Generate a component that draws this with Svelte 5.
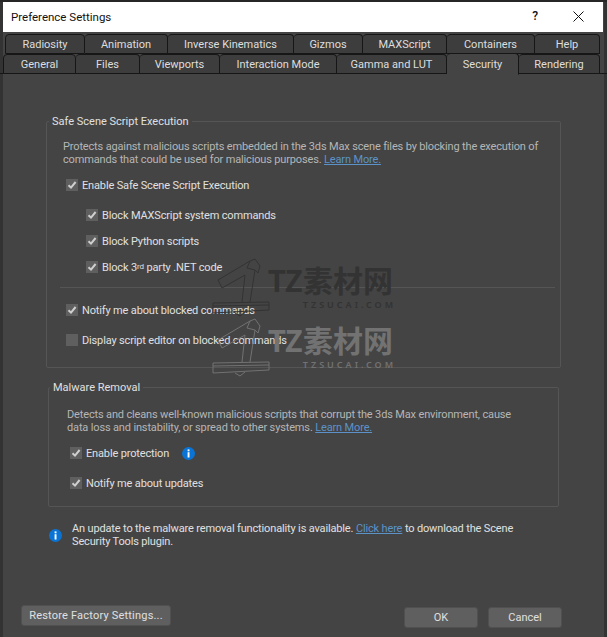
<script>
  const row1 = ['Radiosity', 'Animation', 'Inverse Kinematics', 'Gizmos', 'MAXScript', 'Containers', 'Help'];
  const row2 = ['General', 'Files', 'Viewports', 'Interaction Mode', 'Gamma and LUT', 'Security', 'Rendering'];
</script>

{#snippet check(on)}
  <span class="box">
    {#if on}
      <svg viewBox="0 0 12 12" width="12" height="12"><path d="M2.5 6.2 5 8.6 9.6 3" fill="none" stroke="#cfcfcf" stroke-width="2" /></svg>
    {/if}
  </span>
{/snippet}

{#snippet info()}
  <svg class="info" viewBox="0 0 13 13" width="13" height="13">
    <circle cx="6.5" cy="6.5" r="6.5" fill="#0a74d6" />
    <rect x="5.6" y="2.4" width="1.9" height="1.9" fill="#fff" />
    <rect x="5.6" y="5.2" width="1.9" height="5.3" fill="#fff" />
  </svg>
{/snippet}

{#snippet mark(cls)}
  <div class="mark {cls}">
    <svg viewBox="0 0 60 64" width="60" height="64">
      <g fill="none" stroke="currentColor" stroke-width="1">
        <path d="M5 22 37 3 42 1 47 8 45 15 42 12 37 44M9 30 5 22M9 30 32 17 29 44M37 3 34 10 42 12" />
        <path d="M0 45 56 44V52L0 55ZM0 48 56 47M22 55 27 58 32 54" />
      </g>
    </svg>
    <div class="mark-text">
      <span class="mark-big">TZ素材网</span>
      <span class="mark-small">TZSUCAI.COM</span>
    </div>
  </div>
{/snippet}

<div class="window">
  <header class="titlebar">
    <span class="title">Preference Settings</span>
    <span class="help">?</span>
    <svg class="close" viewBox="0 0 11 11" width="11" height="11"><path d="M.5.5l10 10M10.5.5l-10 10" stroke="#111" fill="none" stroke-width="1" /></svg>
  </header>

  <nav class="tabs">
    <div class="tabrow first">
      {#each row1 as t}<span class="tab">{t}</span>{/each}
    </div>
    <div class="tabrow second">
      {#each row2 as t}<span class="tab" class:active={t === 'Security'}>{t}</span>{/each}
    </div>
  </nav>

  <main class="panel">
    <section class="group one">
      <h2>Safe Scene Script Execution</h2>
      <p class="desc">Protects against malicious scripts embedded in the 3ds Max scene files by blocking the execution of<br />commands that could be used for malicious purposes. <a href="#top">Learn More.</a></p>
      <div class="opt o1">{@render check(true)}<span>Enable Safe Scene Script Execution</span></div>
      <div class="sub">
        <div class="opt">{@render check(true)}<span>Block MAXScript system commands</span></div>
        <div class="opt">{@render check(true)}<span>Block Python scripts</span></div>
        <div class="opt">{@render check(true)}<span>Block 3<sup>rd</sup> party .NET code</span></div>
      </div>
      <hr />
      <div class="lower">
        <div class="opt">{@render check(true)}<span>Notify me about blocked commands</span></div>
        <div class="opt">{@render check(false)}<span>Display script editor on blocked commands</span></div>
      </div>
    </section>

    <section class="group two">
      <h2>Malware Removal</h2>
      <p class="desc">Detects and cleans well-known malicious scripts that corrupt the 3ds Max environment, cause<br />data loss and instability, or spread to other systems. <a href="#top">Learn More.</a></p>
      <div class="prot">
        <div class="opt">{@render check(true)}<span>Enable protection</span>{@render info()}</div>
        <div class="opt">{@render check(true)}<span>Notify me about updates</span></div>
      </div>
    </section>

    <div class="notice">
      {@render info()}
      <p>An update to the malware removal functionality is available. <a href="#top">Click here</a> to download the Scene<br />Security Tools plugin.</p>
    </div>
  </main>

  <footer class="footer">
    <button class="restore">Restore Factory Settings...</button>
    <div class="actions">
      <button>OK</button>
      <button>Cancel</button>
    </div>
  </footer>

  {@render mark('dark')}
  {@render mark('light')}
</div>

<style>
  :global(body) {
    margin: 0;
    background: #444;
  }
  .window {
    position: relative;
    width: 607px;
    height: 637px;
    box-sizing: border-box;
    padding-top: 2px;
    display: flex;
    flex-direction: column;
    background: #444;
    color: #e0e0e0;
    font-family: Roboto, sans-serif;
    font-size: 11px;
    letter-spacing: -0.15px;
    overflow: hidden;
    box-shadow: inset 0 2px 0 #262626, inset 3px 0 0 #333, inset -3px 0 0 #333;
  }
  .titlebar {
    height: 30px;
    margin: 0 4px 0 3px;
    background: #fff;
    color: #111;
    display: flex;
    align-items: center;
    flex: none;
  }
  .title {
    margin: 0 0 0 8px;
    font-size: 11.5px;
    letter-spacing: 0;
    flex: 1;
  }
  .help {
    font-size: 12px;
    font-weight: 500;
    margin: -2px 35px 0 0;
  }
  .close {
    margin: -2px 19px 0 0;
  }
  .tabs {
    flex: none;
    height: 42px;
    padding-top: 2px;
    box-sizing: border-box;
    border-bottom: 1px solid #161616;
  }
  .tabrow {
    display: grid;
    height: 20px;
  }
  .first {
    margin-left: 5px;
    width: 595px;
    grid-template-columns: 80px 83px 126px 69px 84px 88px 65px;
  }
  .second {
    margin-left: 3px;
    width: 597px;
    grid-template-columns: 73px 64px 80px 117px 110px 72px 81px;
  }
  .tab {
    display: flex;
    align-items: center;
    justify-content: center;
    background: #3d3d3d;
    border: 1px solid #161616;
    border-left-width: 0;
    border-radius: 4px 4px 0 0;
    color: #dedede;
    letter-spacing: 0;
  }
  .tab:first-child {
    border-left-width: 1px;
  }
  .tab.active {
    background: #444;
    border-bottom-color: #444;
    position: relative;
    margin-top: -1px;
    margin-bottom: -1px;
  }
  .panel {
    flex: 1;
    padding: 47px 46px 0;
    display: flex;
    flex-direction: column;
  }
  .group {
    border: 1px solid #555;
    border-radius: 2px;
    box-sizing: border-box;
  }
  .group h2 {
    width: fit-content;
    margin: -8px 0 0 2px;
    padding: 0 3px;
    background: #444;
    font: inherit;
    line-height: 15px;
    color: #e0e0e0;
    letter-spacing: 0;
  }
  .two h2 {
    margin-left: 1px;
  }
  .one {
    height: 247px;
  }
  .two {
    height: 120px;
    margin: 19px 2px 0;
  }
  .desc {
    margin: 11px 0 0 16px;
    line-height: 13px;
    color: #b6b6b6;
    white-space: nowrap;
  }
  .two .desc {
    margin: 13px 0 0 18px;
  }
  a {
    color: #5b93c9;
  }
  .opt {
    display: flex;
    align-items: center;
    gap: 4px;
    height: 16px;
    white-space: nowrap;
  }
  .box {
    width: 12px;
    height: 12px;
    background: #5f5f5f;
    display: block;
    flex: none;
  }
  .box svg {
    display: block;
  }
  .o1 {
    margin: 11px 0 0 19px;
  }
  .sub {
    margin: 14px 0 0 39px;
    display: flex;
    flex-direction: column;
    gap: 10px;
  }
  sup {
    font-size: 8px;
    line-height: 0;
    vertical-align: 2px;
  }
  hr {
    margin: 12px 5px 0 13px;
    border: 0;
    border-top: 1px solid #555;
  }
  .lower {
    margin: 14px 0 0 19px;
    display: flex;
    flex-direction: column;
    gap: 14px;
  }
  .prot {
    margin: 11px 0 0 21px;
    display: flex;
    flex-direction: column;
    gap: 14px;
  }
  .info {
    flex: none;
  }
  .prot .info {
    margin-left: 9px;
  }
  .notice {
    margin: 15px 0 0 3px;
    display: flex;
    gap: 10px;
    align-items: center;
  }
  .notice p {
    margin: 0;
    line-height: 13px;
    color: #e0e0e0;
    white-space: nowrap;
  }
  .footer {
    flex: none;
    height: 32px;
    padding: 0 45px 0 21px;
    display: flex;
    justify-content: space-between;
  }
  button {
    height: 21px;
    width: 74px;
    background: #5f5f5f;
    border: 1px solid #505050;
    border-radius: 3px;
    color: #e0e0e0;
    font: inherit;
    letter-spacing: 0;
    padding: 0;
  }
  .restore {
    width: 150px;
    letter-spacing: 0.2px;
  }
  .actions {
    display: flex;
    gap: 10px;
    padding-top: 2px;
  }
  .mark {
    position: absolute;
    left: 213px;
    display: flex;
    pointer-events: none;
    letter-spacing: 0;
  }
  .mark.dark {
    top: 258px;
    color: #333;
  }
  .mark.light {
    top: 318px;
    color: #727272;
  }
  .mark svg {
    overflow: visible;
    flex: none;
  }
  .mark-text {
    position: absolute;
    left: 55px;
    top: 5px;
    width: 125px;
    display: flex;
    flex-direction: column;
    align-items: flex-end;
  }
  .mark-big {
    font-family: "Noto Sans CJK SC", sans-serif;
    font-weight: 700;
    font-size: 30px;
    line-height: 33px;
    white-space: nowrap;
  }
  .mark-small {
    font-family: "Noto Sans", sans-serif;
    font-weight: 600;
    font-size: 9px;
    letter-spacing: 3px;
    line-height: 12px;
    margin: 3px -3px 0 0;
    white-space: nowrap;
  }
</style>
